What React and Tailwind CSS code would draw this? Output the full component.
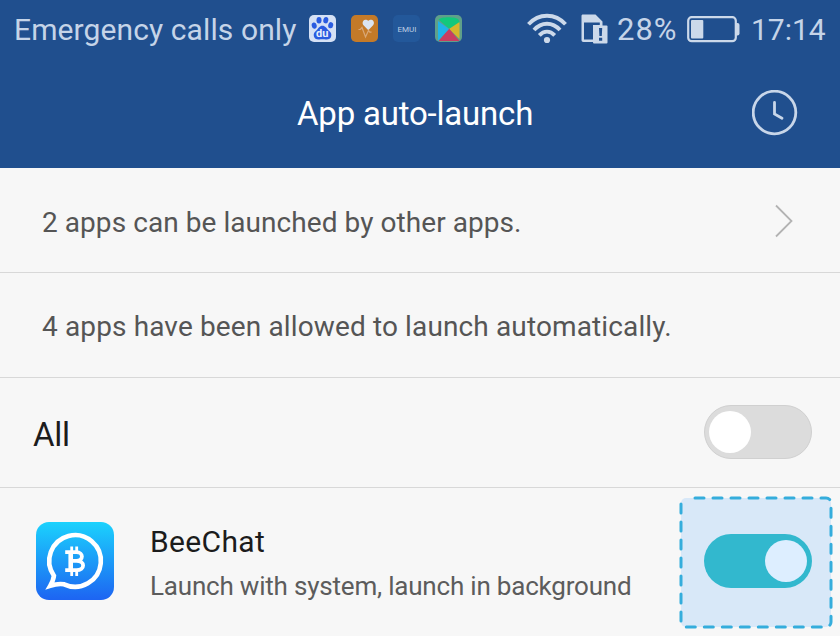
import React from "react";

function BaiduIcon() {
  return (
    <svg className="block h-[27px] w-[27px]" viewBox="0 0 27 27">
      <rect width="27" height="27" rx="5" fill="#d5e1f5" />
      <g fill="#2a5ce0">
        <ellipse cx="5.2" cy="10.6" rx="2.5" ry="3.1" transform="rotate(-12 5.2 10.6)" />
        <ellipse cx="10" cy="5.200" rx="2.500" ry="3.200" />
        <ellipse cx="16.800" cy="5.200" rx="2.500" ry="3.200" transform="rotate(10 16.8 5.2)" />
        <ellipse cx="21.700" cy="10.200" rx="2.500" ry="3.100" transform="rotate(12 21.7 10.2)" />
        <path d="M13.4 10.800c3 0 4 2.500 5.700 4.200 2 1.800 3.700 3.100 3.200 6-.6 3-3 3.600-5.500 3.400-2.300-.2-4.300-.2-6.600 0-2.600.2-4.900-.6-5.400-3.400-.5-2.900 1.200-4.200 3.100-6 1.700-1.700 2.500-4.200 5.500-4.200z" />
      </g>
      <text x="13.300" y="22.300" textAnchor="middle" fontFamily="Roboto, sans-serif" fontWeight="700" fontSize="11" fill="#e8effc">du</text>
    </svg>
  );
}

function HealthIcon() {
  return (
    <svg className="block h-[27px] w-[27px]" viewBox="0 0 27 27">
      <rect width="27" height="27" rx="5" fill="#c47a28" />
      <path d="M17.300 15.300 12.500 10.300c-1.600-1.800-.9-5.300 1.700-5.600 1.300-.1 2.400.4 3.100 1.100.7-.7 1.800-1.200 3.100-1.100 2.600.3 3.300 3.800 1.700 5.600z" fill="#dbe4f0" />
      <path d="M7.500 14.500h1.800l1.700-2 3.500 9.500 3-6.500 1.200 1.700h1.800" fill="none" stroke="#d9a878" strokeWidth="1.200" />
    </svg>
  );
}

function EmuiIcon() {
  return (
    <svg className="block h-[27px] w-[27px]" viewBox="0 0 27 27">
      <rect width="27" height="27" rx="5" fill="#23589a" />
      <text x="4.500" y="16.500" textLength="19" lengthAdjust="spacingAndGlyphs" fontFamily="Roboto, sans-serif" fontSize="8" fill="#bccde3">EMUI</text>
    </svg>
  );
}

function PlayIcon() {
  return (
    <svg className="block h-[27px] w-[27px]" viewBox="0 0 27 27">
      <rect width="27" height="27" rx="5" fill="#5fa08a" />
      <path d="M3.500 4.500C6 1.500 21 1.500 23.500 4.500L25 8 14.500 14z" fill="#12c87c" />
      <path d="M24.500 7v17L14 14z" fill="#d6b52c" />
      <path d="M3.500 26 14 13.500 24.500 26z" fill="#c93d62" />
      <path d="M3 6v20L14 14z" fill="#20b4e8" />
    </svg>
  );
}

function WifiIcon() {
  return (
    <svg className="block h-[32px] w-[40px]" viewBox="0 0 40 32" fill="none" stroke="#ccd9ea" strokeWidth="3.900">
      <path d="M1.500 11.300C11.800-.1 28.200-.1 38.500 11.300" />
      <path d="M7 17C14.500 8.700 25.500 8.700 33 17" />
      <path d="M12.300 22.400C17 17.400 23 17.400 27.700 22.400" />
      <circle cx="20" cy="27" r="3.100" fill="#ccd9ea" stroke="none" />
    </svg>
  );
}

function SimIcon() {
  return (
    <svg className="block h-[30px] w-[27px]" viewBox="0 0 27 30">
      <path fillRule="evenodd" d="M2 .5h12.500L21.500 7.500V12H13V28H2.500C1.200 28 .5 27.300.5 26V2C.5 1 1 .5 2 .5zM3 8.500V25.500H12V11h6.800V8.500z" fill="#ccd9ea" />
      <rect x="12" y="11.500" width="14.500" height="18" rx="1" fill="#ccd9ea" />
      <path d="M18 14h3.200l-.4 8h-2.400zM18 23.800h3.200v3H18z" fill="#204f8e" />
    </svg>
  );
}

function BatteryIcon() {
  return (
    <svg className="block h-[27px] w-[53px]" viewBox="0 0 53 27">
      <rect x="1.200" y="1.200" width="47.600" height="24" rx="3.500" fill="none" stroke="#ccd9ea" strokeWidth="2.200" />
      <path d="M49 7h1.500q2 0 2 2v8.500q0 2-2 2H49z" fill="#ccd9ea" />
      <rect x="4" y="4" width="12.300" height="18.500" rx="1" fill="#ccd9ea" />
    </svg>
  );
}

function BeeChatIcon() {
  return (
    <svg className="block h-[78px] w-[78px]" viewBox="0 0 78 78">
      <defs>
        <linearGradient id="bee" x1="0" y1="0" x2="0" y2="1">
          <stop offset="0" stopColor="#1bd2fd" />
          <stop offset="1" stopColor="#1d64f2" />
        </linearGradient>
      </defs>
      <rect width="78" height="78" rx="13" fill="url(#bee)" />
      <path d="M14.200 63.800Q17.500 58 17.900 53.700A25.800 25.800 0 1 1 28.100 62.300Q22 61.300 14.200 63.800z" fill="none" stroke="#fff" strokeWidth="4.600" strokeLinejoin="miter" />
      <g fill="none" stroke="#fff">
        <path d="M35.700 24.500v6M40.700 24.500v6M35.700 48v6M40.700 48v6" strokeWidth="2.800" />
        <path d="M29.200 30.200H40.500c7.200 0 7.200 8.700 0 8.700h-5M40.500 38.900c8.800 0 8.800 9.200 0 9.200H29.200" strokeWidth="3.800" />
        <path d="M34.700 29v20.500" strokeWidth="4.600" />
      </g>
    </svg>
  );
}

function Switch({ on }) {
  return (
    <div
      role="switch"
      aria-checked={on}
      className={
        on
          ? "flex h-[54px] w-[108px] items-center justify-end rounded-full bg-[#32b8ce] pr-[5px]"
          : "flex h-[54px] w-[108px] items-center justify-start rounded-full border border-[#d0d0d0] bg-[#dcdcdc] pl-[4px]"
      }
    >
      <div className={on ? "h-[42px] w-[42px] rounded-full bg-[#ddeeff]" : "h-[42px] w-[42px] rounded-full bg-white"} />
    </div>
  );
}

export default function App() {
  return (
    <div className="h-[636px] w-[840px] overflow-hidden bg-[#f7f7f7] font-[Roboto,sans-serif] whitespace-nowrap">
      <header className="h-[168px] bg-[#204f8e]">
        <div className="flex h-[58px] items-center text-[30px] leading-[56px] text-[#c5d4e8]">
          <span className="w-[295px] shrink-0 pl-[14px] pt-[2px] tracking-[0.1px]">Emergency calls only</span>
          <div className="flex h-[29px] w-[232px] shrink-0 gap-[15px] pl-[14px]">
            <BaiduIcon />
            <HealthIcon />
            <EmuiIcon />
            <PlayIcon />
          </div>
          <WifiIcon />
          <div className="w-[50px] shrink-0 pl-[14px]">
            <SimIcon />
          </div>
          <span className="w-[70px] shrink-0 pt-[2px] text-[31px] tracking-[1px]">28%</span>
          <BatteryIcon />
          <span className="pl-[11px] pt-[2px]">17:14</span>
        </div>
        <div className="flex h-[110px] items-center pl-[297px]">
          <h1 className="w-[455px] pt-[2px] text-[33px] tracking-[-0.2px] text-white">App auto-launch</h1>
          <svg className="block h-[46px] w-[46px]" viewBox="0 0 46 46" fill="none" stroke="#c8d6e9">
            <circle cx="22.500" cy="22.500" r="21.300" strokeWidth="2.800" />
            <path d="M22.500 12.500v11.500l7.500 4.300" strokeWidth="2.800" strokeLinecap="round" />
          </svg>
        </div>
      </header>

      <main>
        <div className="flex h-[105px] items-center justify-between border-b border-[#d8d8d8] pr-[47px] pl-[42px]">
          <span className="pt-[5px] text-[28px] tracking-[0.06px] text-[#555]">2 apps can be launched by other apps.</span>
          <svg className="mt-px block h-[34px] w-[18px]" viewBox="0 0 18 34" fill="none" stroke="#b3b3b3" strokeWidth="1.800">
            <path d="M1 1.500 16.500 17 1 32.500" />
          </svg>
        </div>
        <div className="flex h-[105px] items-center border-b border-[#d8d8d8] pl-[42px]">
          <span className="pt-[4px] text-[28px] tracking-[0.13px] text-[#555]">4 apps have been allowed to launch automatically.</span>
        </div>
        <div className="flex h-[110px] items-center justify-between border-b border-[#d8d8d8] pr-[28px] pl-[33px]">
          <span className="pt-[4px] text-[33px] tracking-[-0.3px] text-[#1c1c1c]">All</span>
          <div className="pb-[2px]">
            <Switch on={false} />
          </div>
        </div>
        <div className="flex h-[148px] pl-[36px]">
          <div className="w-[114px] shrink-0 pt-[34px]">
            <BeeChatIcon />
          </div>
          <div className="w-[529px] shrink-0 pt-[34px]">
            <div className="text-[30px] leading-[40px] tracking-[0.35px] text-[#1c1c1c]">BeeChat</div>
            <div className="pt-[6px] text-[26px] leading-[36px] tracking-[-0.2px] text-[#5c5c5c]">Launch with system, launch in background</div>
          </div>
          <div className="relative mt-[8px] flex h-[133px] w-[154px] shrink-0 items-center justify-end pr-[21px] pb-[4px]">
            <svg className="absolute inset-0 h-full w-full" viewBox="0 0 154 133">
              <rect x="2" y="2" width="150" height="129" rx="5" fill="#d8e8f8" stroke="#35addc" strokeWidth="3" strokeDasharray="9 9" strokeDashoffset="-9" strokeLinecap="round" />
            </svg>
            <div className="relative">
              <Switch on />
            </div>
          </div>
        </div>
      </main>
    </div>
  );
}
